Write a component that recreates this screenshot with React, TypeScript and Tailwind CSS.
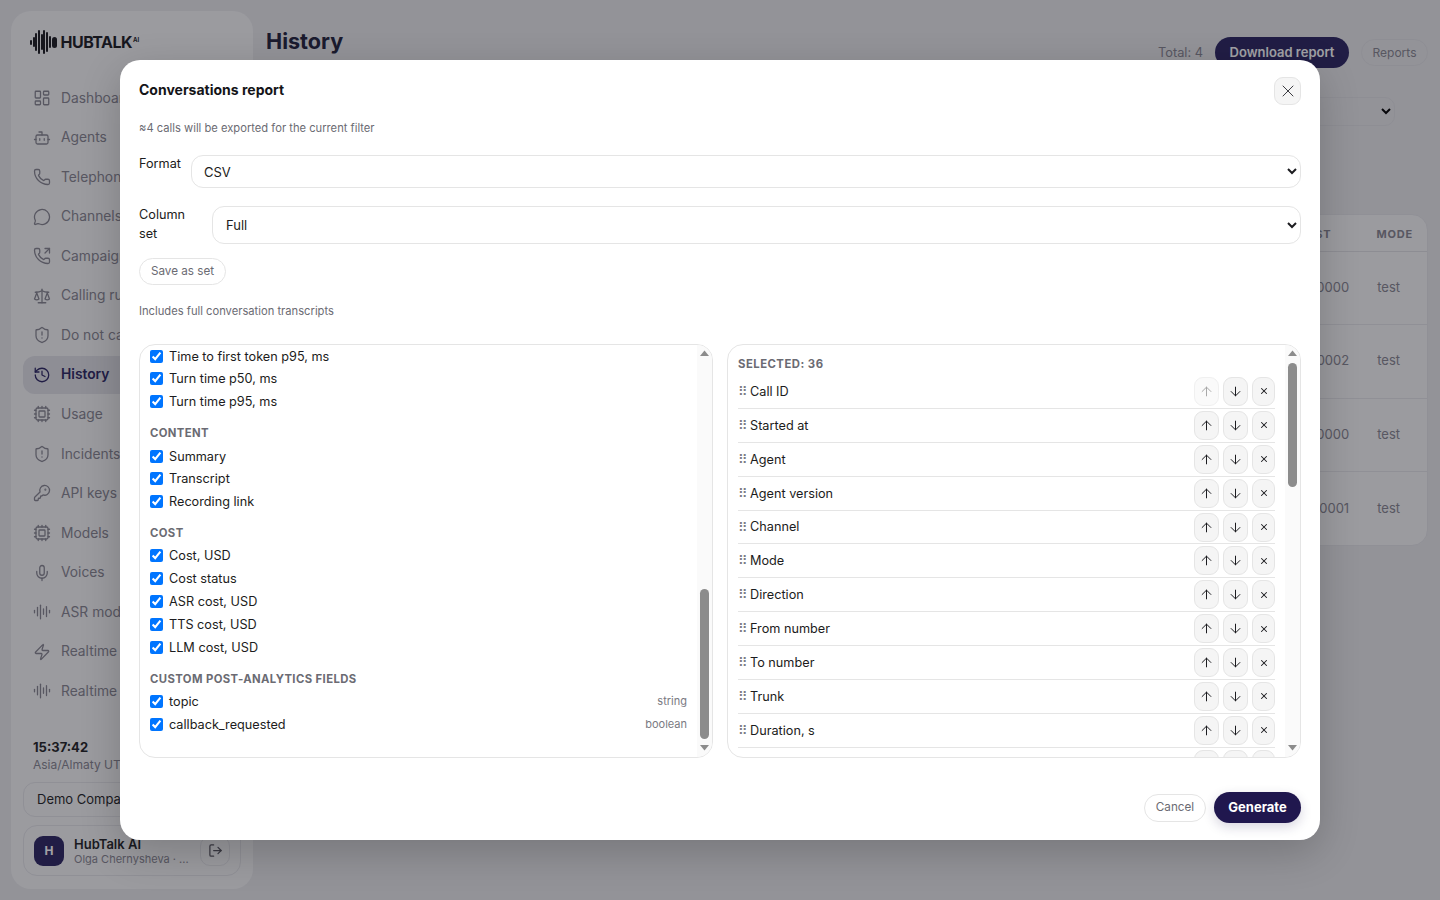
import { useEffect, useRef } from 'react';
import {
  LayoutDashboard, Bot, Phone, MessageCircle, PhoneOutgoing, Scale, ShieldAlert, History, Cpu,
  KeyRound, Mic, AudioLines, Zap, LogOut, X, ArrowUp, ArrowDown,
} from 'lucide-react';

const NAV = [
  { label: 'Dashboard', icon: LayoutDashboard },
  { label: 'Agents', icon: Bot },
  { label: 'Telephony', icon: Phone },
  { label: 'Channels', icon: MessageCircle },
  { label: 'Campaigns', icon: PhoneOutgoing },
  { label: 'Calling rules', icon: Scale },
  { label: 'Do not call', icon: ShieldAlert },
  { label: 'History', icon: History, active: true },
  { label: 'Usage', icon: Cpu },
  { label: 'Incidents', icon: ShieldAlert },
  { label: 'API keys', icon: KeyRound },
  { label: 'Models', icon: Cpu },
  { label: 'Voices', icon: Mic },
  { label: 'ASR models', icon: AudioLines },
  { label: 'Realtime agents', icon: Zap },
  { label: 'Realtime models', icon: AudioLines },
];

const COLUMN_GROUPS: { title: string; items: { label: string; type?: string }[] }[] = [
  { title: 'Call', items: ['Call ID', 'Started at', 'Ended at', 'Agent', 'Agent version', 'Channel', 'Mode', 'Direction', 'From number', 'To number', 'Trunk', 'Duration, s'].map((label) => ({ label })) },
  { title: 'Outcome', items: ['Status', 'End reason', 'Hangup side', 'Language', 'Campaign', 'Attempt'].map((label) => ({ label })) },
  { title: 'Quality', items: ['Latency p50, ms', 'Latency p95, ms', 'Time to first token p50, ms', 'Time to first token p95, ms', 'Turn time p50, ms', 'Turn time p95, ms'].map((label) => ({ label })) },
  { title: 'Content', items: ['Summary', 'Transcript', 'Recording link'].map((label) => ({ label })) },
  { title: 'Cost', items: ['Cost, USD', 'Cost status', 'ASR cost, USD', 'TTS cost, USD', 'LLM cost, USD'].map((label) => ({ label })) },
  { title: 'Custom post-analytics fields', items: [{ label: 'topic', type: 'string' }, { label: 'callback_requested', type: 'boolean' }] },
];

const SELECTED = [
  'Call ID', 'Started at', 'Agent', 'Agent version', 'Channel', 'Mode', 'Direction', 'From number', 'To number', 'Trunk', 'Duration, s',
  'Ended at', 'Status', 'End reason', 'Hangup side', 'Language', 'Campaign', 'Attempt', 'Latency p50, ms', 'Latency p95, ms',
  'Time to first token p50, ms', 'Time to first token p95, ms', 'Turn time p50, ms', 'Turn time p95, ms', 'Summary', 'Transcript',
  'Recording link', 'Cost, USD', 'Cost status', 'ASR cost, USD', 'TTS cost, USD', 'LLM cost, USD', 'topic', 'callback_requested', 'Tags', 'Notes',
];

const ROWS = ['$0.0000', '$0.0002', '$0.0000', '$0.0001'];

function Logo() {
  const bars = [5, 10, 18, 24, 16, 24, 20, 12];
  return (
    <div className="flex items-center h-[24px]">
      <div className="flex items-center gap-[0.7px] mr-[4px]">
        {bars.map((h, i) => (
          <span key={i} className="w-[2px] rounded-full bg-[#1a1a1f]" style={{ height: h }} />
        ))}
        <span className="w-[5px] h-[11px] rounded-full bg-[#1a1a1f]" />
      </div>
      <span className="text-[16px] font-bold tracking-[-0.5px] text-[#1a1a1f]">HUBTALK</span>
      <span className="text-[6px] font-bold text-[#1a1a1f] mb-[6px] ml-[1px]">AI</span>
    </div>
  );
}

function Sidebar() {
  return (
    <aside className="w-[242px] h-[878px] shrink-0 rounded-[20px] bg-[#f5f5f6] flex flex-col px-[12px]">
      <div className="pl-[7px] pt-[19px] h-[68px]">
        <Logo />
      </div>
      <nav className="flex flex-col gap-[1.55px]">
        {NAV.map((item) => (
          <div
            key={item.label}
            className={`h-[38px] rounded-[12px] flex items-center gap-[10px] px-[10px] text-[13.8px] ${item.active ? 'bg-[#dfdfe4] text-[#2a2460] font-semibold' : 'text-[#85848e]'}`}
          >
            <item.icon size={18} strokeWidth={1.7} />
            <span>{item.label}</span>
          </div>
        ))}
      </nav>
      <div className="mt-[28px] pl-[10px] text-[13px] font-bold text-[#1f1f24] leading-[18px]">15:37:42</div>
      <div className="pl-[10px] text-[12px] text-[#85848e] leading-[18px] whitespace-nowrap">Asia/Almaty UTC+5</div>
      <div className="mt-[8px] h-[35px] rounded-[12px] border border-[#e3e3e6] flex items-center px-[13px] text-[13px] text-[#1f1f24]">
        Demo Company
      </div>
      <div className="mt-[8px] h-[51px] rounded-[14px] border border-[#e3e3e6] flex items-center pl-[10px] pr-[10px]">
        <div className="w-[30px] h-[30px] rounded-[9px] bg-[#2a2460] text-white text-[12px] font-bold flex items-center justify-center">H</div>
        <div className="ml-[10px] flex-1 min-w-0 pt-[2px]">
          <div className="text-[13px] font-semibold text-[#1f1f24] leading-[15px]">HubTalk AI</div>
          <div className="text-[11px] text-[#85848e] leading-[15px] whitespace-nowrap">Olga Chernysheva · ...</div>
        </div>
        <div className="w-[30px] h-[30px] rounded-[10px] border border-[#e3e3e6] flex items-center justify-center text-[#55545c]">
          <LogOut size={15} />
        </div>
      </div>
    </aside>
  );
}

function Main() {
  return (
    <main className="flex-1 min-w-0 ml-[13px]">
      <div className="flex items-start h-[57px]">
        <h1 className="text-[21.6px] font-bold text-[#20203a] leading-[30px] mt-[15px] flex-1">History</h1>
        <span className="text-[12.8px] text-[#85848e] mt-[32px]">Total: 4</span>
        <button className="ml-[12px] mt-[26px] h-[31px] w-[134px] rounded-full bg-[#2a2460] text-[13px] font-semibold text-white">Download report</button>
        <button className="ml-[12px] mt-[28px] h-[27px] w-[67px] rounded-full border border-[#e0e0e3] text-[12px] text-[#85848e]">Reports</button>
      </div>
      <div className="flex justify-end pr-[33px] mt-[29px]">
        <select className="h-[29px] w-[300px] rounded-[10px] border border-[#e0e0e3] text-[13px]">
          <option>All</option>
        </select>
      </div>
      <div className="mt-[88px] h-[332px] rounded-[16px] border border-[#e3e3e6] bg-[#f5f5f6]">
        <div className="h-[37px] pt-[2px] border-b border-[#dedee1] flex items-center justify-end pr-[14px] text-[11px] font-bold tracking-[0.8px] text-[#85848e]">
          <span>COST</span>
          <span className="ml-[45px]">MODE</span>
        </div>
        {ROWS.map((cost, i) => (
          <div key={i} className="h-[73.4px] pb-[1px] border-b border-[#e3e3e6] last:border-b-0 flex items-center justify-end pr-[27px] text-[13px] text-[#85848e]">
            <span>{cost}</span>
            <span className="ml-[28px]">test</span>
          </div>
        ))}
      </div>
    </main>
  );
}

// stands in for the native scrollbar, which the headless browser hides
function Scrollbar({ thumb }: { thumb: string }) {
  return (
    <div className="absolute top-0 right-0 bottom-0 w-[15px] bg-[#fafafa] pointer-events-none">
      <svg width="9" height="6" viewBox="0 0 9 6" className="absolute top-[5px] left-[3px]">
        <path d="M4.5 0.5 L9 6 L0 6 Z" fill="#8c8c8c" />
      </svg>
      <div className={`absolute left-[2.5px] w-[9px] rounded-full bg-[#8c8c8c] ${thumb}`} />
      <svg width="9" height="6" viewBox="0 0 9 6" className="absolute bottom-[6px] left-[3px]">
        <path d="M4.5 5.5 L9 0 L0 0 Z" fill="#8c8c8c" />
      </svg>
    </div>
  );
}

function ColumnPicker() {
  const ref = useRef<HTMLDivElement>(null);
  useEffect(() => {
    if (ref.current) ref.current.scrollTop = ref.current.scrollHeight;
  }, []);
  return (
    <div className="relative h-[414px] rounded-[16px] border border-[#e5e5e5] overflow-hidden">
      <div ref={ref} className="h-full overflow-y-auto pl-[10px] pr-[25px] pt-[8px] pb-[21.5px]">
        {COLUMN_GROUPS.map((group) => (
          <div key={group.title} className="mb-[9.5px] last:mb-0">
            <div className="h-[22px] flex items-center text-[11.3px] font-bold uppercase tracking-[0.4px] text-[#6b6b73]">{group.title}</div>
            {group.items.map((item) => (
              <label key={item.label} className="h-[22.8px] flex items-center text-[12.7px] text-[#1c1c20]">
                <input type="checkbox" defaultChecked className="mr-[6px] w-[13px] h-[13px]" />
                <span className="flex-1">{item.label}</span>
                {item.type && <span className="text-[11px] text-[#7a7a82]">{item.type}</span>}
              </label>
            ))}
          </div>
        ))}
      </div>
      <Scrollbar thumb="top-[244px] h-[150px]" />
    </div>
  );
}

function MoveButton({ children, disabled, narrow }: { children: React.ReactNode; disabled?: boolean; narrow?: boolean }) {
  return (
    <button
      disabled={disabled}
      className={`${narrow ? 'w-[23px]' : 'w-[25px]'} h-[29px] rounded-[9px] border flex items-center justify-center ${disabled ? 'bg-[#fafafa] border-[#f0f0f0] text-[#a8a8a8]' : 'bg-[#f5f5f5] border-[#e5e5e5] text-[#1c1c20]'}`}
    >
      {children}
    </button>
  );
}

function SelectedList() {
  return (
    <div className="relative h-[414px] rounded-[16px] border border-[#e5e5e5] overflow-hidden">
      <div className="h-full overflow-y-auto pl-[10px] pr-[25px] pt-[9px]">
        <div className="h-[20px] mb-[1px] flex items-center text-[11.3px] font-bold uppercase tracking-[0.5px] text-[#6b6b73]">Selected: 36</div>
        {SELECTED.map((label, i) => (
          <div key={label} className="h-[33.9px] border-b border-[#e5e5e5] flex items-center">
            <span className="text-[13px] text-[#7c7c84] w-[12px] leading-none">⠿</span>
            <span className="flex-1 text-[12.7px] text-[#1c1c20]">{label}</span>
            <div className="flex gap-[4px]">
              <MoveButton disabled={i === 0}><ArrowUp size={15} strokeWidth={1.6} /></MoveButton>
              <MoveButton><ArrowDown size={15} strokeWidth={1.6} /></MoveButton>
              <MoveButton narrow><X size={10} strokeWidth={2.5} /></MoveButton>
            </div>
          </div>
        ))}
      </div>
      <Scrollbar thumb="top-[18px] h-[124px]" />
    </div>
  );
}

function ReportDialog() {
  return (
    <div className="absolute inset-0 bg-[#14141e]/40 flex items-center justify-center">
      <div className="w-[1200px] h-[780px] rounded-[20px] bg-white shadow-[0_12px_40px_rgba(0,0,0,0.2)] px-[19px] flex flex-col">
        <div className="flex items-start justify-between pt-[17px] h-[60px]">
          <h2 className="text-[14px] font-bold text-[#141418] leading-[26px]">Conversations report</h2>
          <button className="w-[27px] h-[28px] rounded-[9px] bg-[#f5f5f5] border border-[#e5e5e5] flex items-center justify-center text-[#3c3c42]">
            <X size={20} strokeWidth={1.2} />
          </button>
        </div>
        <p className="text-[11.2px] text-[#6b6b73] leading-[16px]">≈4 calls will be exported for the current filter</p>
        <div className="mt-[19px] flex gap-[10px] items-start">
          <label className="text-[12.7px] text-[#1c1c20] leading-[19px] mt-[-1px]">Format</label>
          <select className="flex-1 h-[33px] rounded-[12px] border border-[#e5e5e5] bg-white pl-[8px] text-[13px] text-[#1c1c20]">
            <option>CSV</option>
          </select>
        </div>
        <div className="mt-[18px] flex gap-[10px] items-start">
          <label className="w-[63px] text-[12.7px] text-[#1c1c20] leading-[19px] mt-[-1px]">Column set</label>
          <select className="flex-1 h-[38px] rounded-[12px] border border-[#e5e5e5] bg-white pl-[9px] text-[13px] text-[#1c1c20]">
            <option>Full</option>
          </select>
        </div>
        <button className="mt-[14px] w-[87px] h-[27px] rounded-full border border-[#e5e5e5] text-[11.7px] text-[#6b6b73]">Save as set</button>
        <p className="mt-[18px] text-[11.2px] text-[#6b6b73] leading-[16px]">Includes full conversation transcripts</p>
        <div className="mt-[25px] grid grid-cols-2 gap-[14px]">
          <ColumnPicker />
          <SelectedList />
        </div>
        <div className="mt-[34px] flex justify-end items-center gap-[8px]">
          <button className="w-[62px] h-[28px] rounded-full border border-[#e5e5e5] text-[11.7px] text-[#6b6b73]">Cancel</button>
          <button className="w-[87px] h-[31px] rounded-full bg-[#20174e] text-[13px] font-bold text-white shadow-[0_4px_12px_rgba(32,23,78,0.18)]">Generate</button>
        </div>
      </div>
    </div>
  );
}

export default function App() {
  return (
    <div className="relative w-[1440px] h-[900px] overflow-hidden bg-[#e8e8ea] font-['Inter',sans-serif] flex p-[11px] pr-[12px]">
      <Sidebar />
      <Main />
      <ReportDialog />
    </div>
  );
}
